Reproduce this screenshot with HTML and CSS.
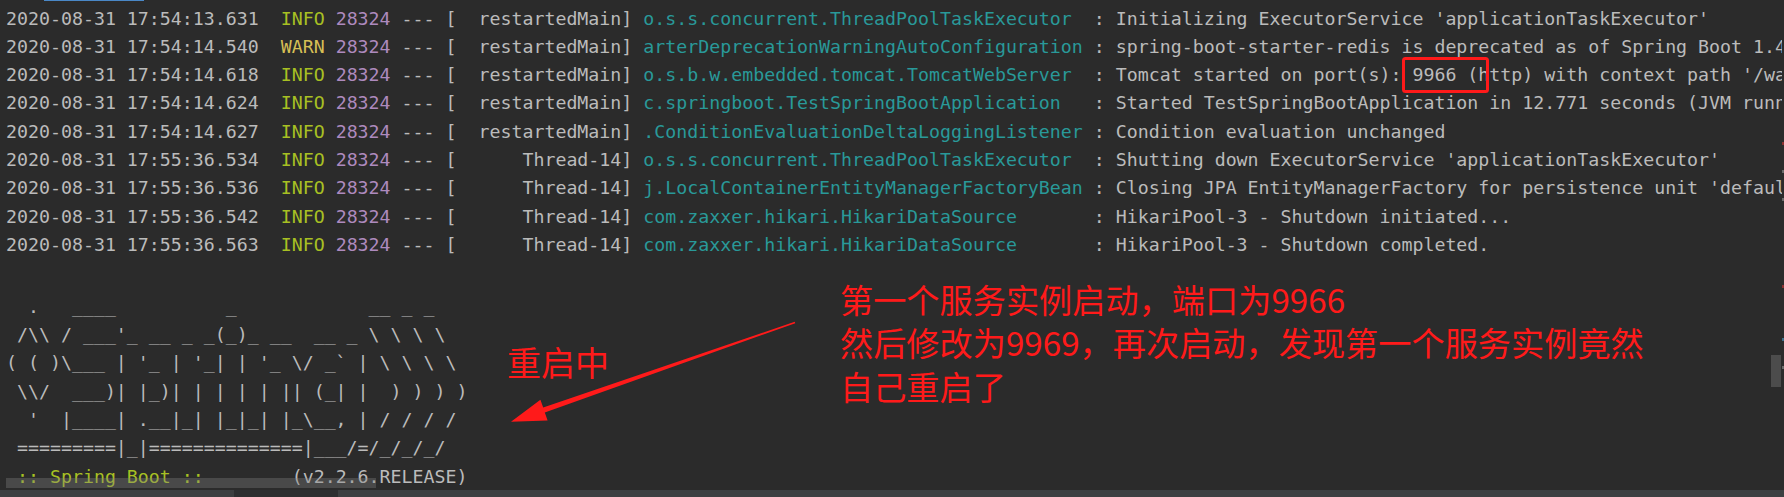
FILE: index.html
```html
<!DOCTYPE html>
<html lang="zh-CN">
<head>
<meta charset="utf-8">
<title>Console</title>
<link rel="stylesheet" href="styles.css">
</head>
<body>
<div class="window">
  <div class="top-tab"></div>
  <div class="console">
    <div class="log">
      <div class="line">2020-08-31 17:54:13.631  <span class="info">INFO</span> <span class="pid">28324</span> --- [  restartedMain] <span class="logger">o.s.s.concurrent.ThreadPoolTaskExecutor </span> : Initializing ExecutorService 'applicationTaskExecutor'</div>
      <div class="line">2020-08-31 17:54:14.540  <span class="warn">WARN</span> <span class="pid">28324</span> --- [  restartedMain] <span class="logger">arterDeprecationWarningAutoConfiguration</span> : spring-boot-starter-redis is deprecated as of Spring Boot 1.4, please migrate to spring-boot-starter-data-redis</div>
      <div class="line">2020-08-31 17:54:14.618  <span class="info">INFO</span> <span class="pid">28324</span> --- [  restartedMain] <span class="logger">o.s.b.w.embedded.tomcat.TomcatWebServer </span> : Tomcat started on port(s): 9966 (http) with context path '/wanda'</div>
      <div class="line">2020-08-31 17:54:14.624  <span class="info">INFO</span> <span class="pid">28324</span> --- [  restartedMain] <span class="logger">c.springboot.TestSpringBootApplication  </span> : Started TestSpringBootApplication in 12.771 seconds (JVM running for 13.954)</div>
      <div class="line">2020-08-31 17:54:14.627  <span class="info">INFO</span> <span class="pid">28324</span> --- [  restartedMain] <span class="logger">.ConditionEvaluationDeltaLoggingListener</span> : Condition evaluation unchanged</div>
      <div class="line">2020-08-31 17:55:36.534  <span class="info">INFO</span> <span class="pid">28324</span> --- [      Thread-14] <span class="logger">o.s.s.concurrent.ThreadPoolTaskExecutor </span> : Shutting down ExecutorService 'applicationTaskExecutor'</div>
      <div class="line">2020-08-31 17:55:36.536  <span class="info">INFO</span> <span class="pid">28324</span> --- [      Thread-14] <span class="logger">j.LocalContainerEntityManagerFactoryBean</span> : Closing JPA EntityManagerFactory for persistence unit 'default'</div>
      <div class="line">2020-08-31 17:55:36.542  <span class="info">INFO</span> <span class="pid">28324</span> --- [      Thread-14] <span class="logger">com.zaxxer.hikari.HikariDataSource      </span> : HikariPool-3 - Shutdown initiated...</div>
      <div class="line">2020-08-31 17:55:36.563  <span class="info">INFO</span> <span class="pid">28324</span> --- [      Thread-14] <span class="logger">com.zaxxer.hikari.HikariDataSource      </span> : HikariPool-3 - Shutdown completed.</div>
    </div>
    <div class="gap"></div>
    <div class="log banner">
      <div class="line">  .   ____          _            __ _ _</div>
      <div class="line"> /\\ / ___'_ __ _ _(_)_ __  __ _ \ \ \ \</div>
      <div class="line">( ( )\___ | '_ | '_| | '_ \/ _` | \ \ \ \</div>
      <div class="line"> \\/  ___)| |_)| | | | | || (_| |  ) ) ) )</div>
      <div class="line">  '  |____| .__|_| |_|_| |_\__, | / / / /</div>
      <div class="line"> =========|_|==============|___/=/_/_/_/</div>
      <div class="line"><span class="info"> :: Spring Boot :: </span>       (v2.2.6.RELEASE)</div>
    </div>

    <div class="hscroll-thumb"></div>
    <div class="vscroll-thumb"></div>
    <div class="marks">
      <span class="mark red m1"></span>
      <span class="mark gray m2"></span>
      <span class="mark gray m3"></span>
      <span class="mark red m4"></span>
      <span class="mark gray m5"></span>
      <span class="mark blue m6"></span>
    </div>

    <svg class="overlay" width="1784" height="490" viewBox="0 0 1784 490" xmlns="http://www.w3.org/2000/svg">
      <rect x="1403.5" y="58.5" width="84" height="33" rx="2" fill="none" stroke="#ff1a1a" stroke-width="3"/>
      <polygon fill="#ff1a1a" points="795.3,323.2 794.7,321.8 543.2,407.6 540.4,399.8 511,421.7 547.6,420.6 544.8,412.4"/>
    </svg>
    <div class="note note-restart">重启中</div>
    <div class="note note-main">第一个服务实例启动，端口为9966<br>然后修改为9969，再次启动，发现第一个服务实例竟然<br>自己重启了</div>
  </div>
  <div class="statusbar">
    <div class="seg seg-a"></div>
    <div class="seg seg-b"></div>
    <div class="seg seg-c"></div>
  </div>
</div>
</body>
</html>
```

FILE: styles.css
```css
html, body {
  margin: 0;
  padding: 0;
  background: #2b2b2b;
}

.window {
  position: relative;
  width: 1784px;
  height: 497px;
  overflow: hidden;
  background: #2b2b2b;
}

.top-tab {
  position: absolute;
  left: 44px;
  top: 0;
  width: 100px;
  height: 1px;
  background: #4a88c7;
}

.console {
  position: relative;
  height: 490px;
  width: 1784px;
  overflow: hidden;
}

.log {
  width: 1782px;
  overflow: hidden;
  padding: 4.6px 0 0 6px;
  box-sizing: border-box;
  font-family: "DejaVu Sans Mono", "Liberation Mono", monospace;
  font-size: 18.25px;
  line-height: 28.3px;
  color: #bbbbbb;
}

.line {
  white-space: pre;
  height: 28.3px;
}

.banner {
  padding-top: 0;
}

.gap {
  height: 33.6px;
}

.info { color: #a8c023; }
.warn { color: #d6bf55; }
.pid { color: #ae8abe; }
.logger { color: #299999; }

.hscroll-thumb {
  position: absolute;
  left: 6px;
  top: 478px;
  width: 370px;
  height: 10px;
  background: rgba(128, 128, 128, 0.35);
}

.vscroll-thumb {
  position: absolute;
  left: 1771px;
  top: 355px;
  width: 10px;
  height: 32px;
  background: #4c4c4c;
}

.marks .mark {
  position: absolute;
  left: 1782px;
  width: 2px;
  height: 3px;
}
.mark.red { background: #8a3030; }
.mark.gray { background: #6a6a6a; }
.mark.blue { background: #3f6f8a; }
.m1 { top: 142px; }
.m2 { top: 170px; }
.m3 { top: 198px; }
.m4 { top: 285px; }
.m5 { top: 366px; }
.m6 { top: 338px; }

.overlay {
  position: absolute;
  left: 0;
  top: 0;
}

.note {
  position: absolute;
  font-family: "Noto Sans CJK SC", "Microsoft YaHei", sans-serif;
  font-size: 34px;
  line-height: 43.3px;
  color: #ff1a1a;
  white-space: nowrap;
}

.note-restart {
  left: 507px;
  top: 339.5px;
}

.note-main {
  left: 840px;
  top: 277px;
  font-size: 33.2px;
}

.statusbar {
  display: flex;
  height: 7px;
}

.seg-a {
  width: 234px;
  background: #3c3f41;
}
.seg-b {
  width: 104px;
  background: #2d2f31;
}
.seg-c {
  flex: 1;
  background: #3c3f41;
}
```
